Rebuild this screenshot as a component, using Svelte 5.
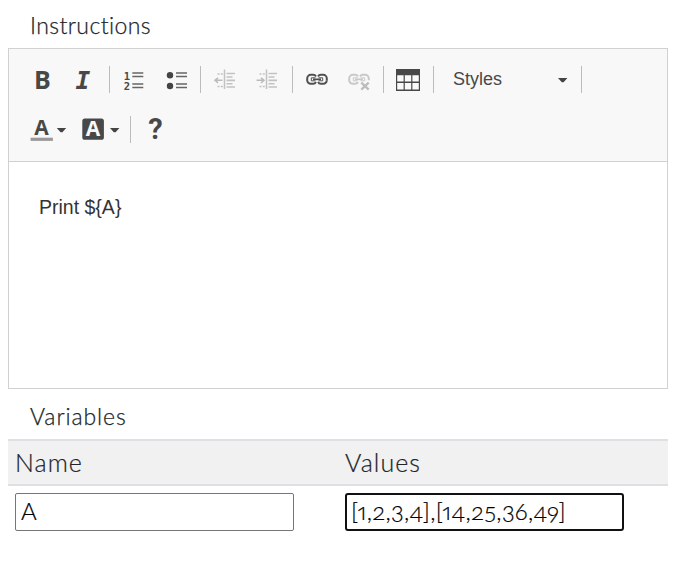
<script>
  let name = $state('A');
  let values = $state('[1,2,3,4],[14,25,36,49]');
</script>

{#snippet arrow(x)}
  <path d="M{x} 12h9.4L{x + 5.6} 16.2h-1.8z" fill="#444" />
{/snippet}

{#snippet indentLines()}
  <path d="M20.5 3.5V23" stroke="#c2c2c2" stroke-width="1.5" />
  <path d="M22.5 7.5H31M22.5 11H28.5M22.5 14.4H31M22.5 17.8H28.5M22.5 21H31" stroke="#c2c2c2" stroke-width="1.6" />
  <path d="M13.5 8h2M16.8 8h2M13.5 20.5h2M16.8 20.5h2" stroke="#c2c2c2" stroke-width="1.3" />
{/snippet}

{#snippet chain(color)}
  <g fill="none" stroke={color} stroke-width="2">
    <path d="M20 10.5c-.7-1.2-1.5-1.7-2.8-1.7H14.8a3.6 3.6 0 0 0-3.6 3.6v1.8a3.6 3.6 0 0 0 3.6 3.6h2.4c1.3 0 2.1-.5 2.8-1.7" />
    <path d="M22 10.5c.7-1.2 1.5-1.7 2.8-1.7h2.4a3.6 3.6 0 0 1 3.6 3.6v1.8" />
    <path d="M19.5 11.8h-4.2v3h4.2M22.5 11.8h4.2v3h-4.2" stroke-width="1" />
    <path d="M17 13.3h8" stroke-width="1.7" />
  </g>
{/snippet}

<main>
  <h2>Instructions</h2>
  <section class="editor">
    <div class="toolbar">
      <div class="row">
        <button aria-label="Bold"><svg viewBox="0 0 42 28"><text x="12" y="22.8" class="glyph" font-size="25">B</text></svg></button>
        <button aria-label="Italic"><svg viewBox="0 0 42 28"><text x="11.5" y="22.8" class="mono" font-size="24.5" font-style="italic">I</text></svg></button>
        <i class="sep"></i>
        <button aria-label="Numbered list">
          <svg viewBox="0 0 42 28">
            <text x="10.8" y="14" class="mono" font-size="10.5">1</text>
            <text x="10.8" y="24.4" class="mono" font-size="10.5">2</text>
            <path d="M19.3 7h11M19.3 10.5h11M19.3 18h11M19.3 21.5h11" stroke="#666" stroke-width="1.7" />
          </svg>
        </button>
        <button aria-label="Bulleted list">
          <svg viewBox="0 0 42 28">
            <circle cx="15" cy="9.2" r="3.2" fill="#444" /><circle cx="15" cy="20" r="3.2" fill="#444" />
            <path d="M21 7h11M21 10.5h11M21 18h11M21 21.5h11" stroke="#666" stroke-width="1.7" />
          </svg>
        </button>
        <i class="sep"></i>
        <button aria-label="Decrease indent">
          <svg viewBox="0 0 42 28">{@render indentLines()}<path d="M11 14.3h7.5M14 11.8l-3 2.5 3 2.5" fill="none" stroke="#bbb" stroke-width="1.5" /></svg>
        </button>
        <button aria-label="Increase indent">
          <svg viewBox="0 0 42 28">{@render indentLines()}<path d="M10.5 14.3H18M15 11.8l3 2.5-3 2.5" fill="none" stroke="#bbb" stroke-width="1.5" /></svg>
        </button>
        <i class="sep wide"></i>
        <button aria-label="Link">
          <svg viewBox="0 0 42 28">{@render chain('#505050')}<path d="M30.8 14.2a3.6 3.6 0 0 1-3.6 3.6h-2.4c-1.3 0-2.1-.5-2.8-1.7" fill="none" stroke="#505050" stroke-width="2" /></svg>
        </button>
        <button aria-label="Unlink">
          <svg viewBox="0 0 42 28">{@render chain('#c9c9c9')}<path d="M23.3 16.6l7.4 7M30.7 16.6l-7.4 7" stroke="#bdbdbd" stroke-width="2.3" /></svg>
        </button>
        <i class="sep"></i>
        <button aria-label="Table">
          <svg viewBox="0 0 42 28">
            <path d="M9 3h24v22H9z" fill="#484848" />
            <path d="M10.2 9.2h6.4v6.2h-6.4zM17.8 9.2h6.4v6.2h-6.4zM25.4 9.2h6.4v6.2h-6.4zM10.2 17h6.4v6.6h-6.4zM17.8 17h6.4v6.6h-6.4zM25.4 17h6.4v6.6h-6.4z" fill="#fafafa" />
          </svg>
        </button>
        <i class="sep wide"></i>
        <button class="combo"><span>Styles</span><svg class="small" viewBox="0 0 20 28">{@render arrow(0)}</svg></button>
        <i class="sep"></i>
      </div>
      <div class="row">
        <button class="color" aria-label="Text colour">
          <svg viewBox="0 0 52 28"><text x="12.2" y="19" class="glyph" font-size="21">A</text><path d="M8.6 21.7h22.3v3.2H8.6z" fill="#999" />{@render arrow(34.8)}</svg>
        </button>
        <button class="color" aria-label="Background colour">
          <svg viewBox="0 0 52 28"><rect x="8.3" y="2.4" width="21.6" height="21.4" rx="2.6" fill="#484848" /><text x="11.8" y="20.4" class="glyph light" font-size="21">A</text>{@render arrow(36)}</svg>
        </button>
        <i class="sep wide"></i>
        <button aria-label="Help"><svg viewBox="0 0 42 28"><text x="14.2" y="23.4" class="glyph help" font-size="29">?</text></svg></button>
      </div>
    </div>
    <div class="content"><p>Print $&#123;A&#125;</p></div>
  </section>

  <h2 class="variables">Variables</h2>
  <div class="table">
    <div class="head"><span>Name</span><span>Values</span></div>
    <div class="fields">
      <div><input aria-label="Name" bind:value={name} /></div>
      <div><input aria-label="Values" class="active" bind:value={values} /></div>
    </div>
  </div>
</main>

<style>
  :global(body) { background: #fff; }
  main {
    box-sizing: border-box;
    width: 692px;
    height: 566px;
    padding: 0 24px 0 8px;
    overflow: hidden;
    font-family: Lato, "Open Sans", sans-serif;
    color: #212529;
  }
  h2 {
    height: 48px;
    margin: 0;
    padding-left: 22px;
    font-size: 23px;
    font-weight: 300;
    line-height: 50px;
    letter-spacing: 0.42px;
    -webkit-text-stroke: 0.25px;
  }
  .editor {
    box-sizing: border-box;
    height: 341px;
    border: 1px solid #d1d1d1;
  }
  .toolbar {
    box-sizing: border-box;
    height: 113px;
    padding: 17px 0 0 13px;
    border-bottom: 1px solid #d1d1d1;
    background: #f8f8f8;
  }
  .row { display: flex; height: 28px; margin-bottom: 22px; }
  button {
    width: 42px;
    height: 28px;
    padding: 0;
    border: 0;
    background: none;
    flex: none;
  }
  .color { width: 52px; }
  svg { display: block; width: 100%; height: 28px; overflow: visible; }
  .sep { flex: none; width: 1px; height: 27px; margin: 0 3px; background: #bcbcbc; }
  .wide { margin-left: 4px; }
  .glyph { font-family: "Open Sans", sans-serif; font-weight: 700; fill: #484848; }
  .light { fill: #f8f8f8; }
  .help { font-family: Roboto, sans-serif; }
  .mono { font-family: "DejaVu Sans Mono", monospace; font-weight: 700; fill: #484848; }
  .combo {
    display: flex;
    justify-content: space-between;
    width: 141px;
    padding-left: 16px;
    font: 18px/26px "Liberation Sans", Arial, sans-serif;
    color: #484848;
  }
  .combo .small { width: 20px; }
  .content { padding: 34px 30px; }
  .content p {
    margin: 0;
    font: 19.5px/23px "Liberation Sans", Arial, sans-serif;
    color: #333;
  }
  .variables { height: 50px; line-height: 54px; letter-spacing: 0.9px; }
  .head {
    box-sizing: border-box;
    display: flex;
    height: 47px;
    border: solid #dee0e3;
    border-width: 2px 0;
    background: #f1f1f1;
    font-size: 25px;
    font-weight: 300;
    line-height: 42px;
    letter-spacing: 1.05px;
    -webkit-text-stroke: 0.2px;
  }
  .head span { flex: 1; padding-left: 7px; }
  .fields { display: flex; padding-top: 7px; }
  .fields div { flex: 1; padding-left: 7px; }
  input {
    box-sizing: border-box;
    display: block;
    width: 279px;
    height: 38px;
    padding: 0 5px 3px;
    border: 1px solid #767676;
    border-radius: 2px;
    outline: 0;
    background: #fff;
    color: #000;
    font-family: Lato, sans-serif;
    font-size: 24px;
    font-weight: 300;
    letter-spacing: 0.28px;
    font-variant-numeric: oldstyle-nums proportional-nums;
    -webkit-text-stroke: 0.2px;
  }
  .active { border: 2px solid #101010; border-radius: 3px; padding: 0 4px 4px; }
</style>
